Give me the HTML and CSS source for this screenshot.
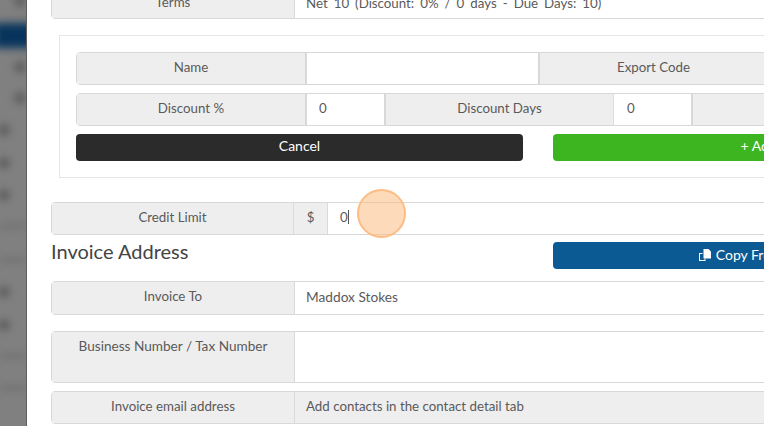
FILE: index.html
```html
<!DOCTYPE html>
<html lang="en">
<head>
<meta charset="utf-8">
<title>Customer</title>
<link rel="stylesheet" href="styles.css">
</head>
<body>
<div class="page">
  <aside class="sidebar">
    <div class="nav-item nav-active"></div>
    <div class="nav-dot nav-dot-0"></div>
    <div class="nav-dot nav-dot-a"></div>
    <div class="nav-dot nav-dot-b"></div>
    <div class="nav-dot nav-dot-c"></div>
    <div class="nav-dot nav-dot-d"></div>
    <div class="nav-dot nav-dot-e"></div>
    <div class="nav-dot nav-dot-f"></div>
    <div class="nav-dot nav-dot-g"></div>
    <div class="nav-streak nav-streak-a"></div>
    <div class="nav-streak nav-streak-b"></div>
    <div class="nav-streak nav-streak-c"></div>
    <div class="nav-streak nav-streak-d"></div>
  </aside>
  <main class="main">
    <div class="row row-terms">
      <div class="label label-lg label-terms">Terms</div>
      <div class="value value-terms">Net 10 (Discount: 0% / 0 days - Due Days: 10)</div>
    </div>

    <section class="box">
      <div class="row row-box">
        <div class="label label-box">Name</div>
        <div class="value value-name"></div>
        <div class="label label-box label-join">Export Code</div>
      </div>
      <div class="row row-box">
        <div class="label label-box">Discount %</div>
        <div class="value value-num">0</div>
        <div class="label label-box label-join">Discount Days</div>
        <div class="value value-num value-num2">0</div>
        <div class="label label-box label-join">Due Days</div>
      </div>
      <div class="btn-row">
        <div class="btn btn-dark">Cancel</div>
        <div class="btn btn-green">+ Add Terms</div>
      </div>
    </section>

    <div class="row row-credit">
      <div class="label label-credit">Credit Limit</div>
      <div class="addon">$</div>
      <div class="value value-credit">0<span class="caret"></span></div>
    </div>

    <div class="heading-row">
      <h2 class="heading">Invoice Address</h2>
      <div class="btn btn-blue">
        <svg class="icon" viewBox="0 0 14 14" width="14" height="14" aria-hidden="true">
          <path d="M1 5h3.500v1H2v6h4.500v-1.500h1V13H1z" fill="#fff"/>
          <path d="M5.500 1h5l2.500 2.500V10.500H5.500z" fill="#fff"/>
        </svg>
        Copy From Customers
      </div>
    </div>

    <div class="row row-invoice">
      <div class="label label-lg">Invoice To</div>
      <div class="value value-wide">Maddox Stokes</div>
    </div>
    <div class="row row-tax">
      <div class="label label-lg label-top">Business Number / Tax Number</div>
      <div class="value"></div>
    </div>
    <div class="row row-email">
      <div class="label label-lg">Invoice email address</div>
      <div class="value value-grey">Add contacts in the contact detail tab</div>
    </div>
  </main>
</div>
<div class="click-ring"></div>
</body>
</html>
```

FILE: styles.css
```css
* { box-sizing: border-box; }
html, body { margin: 0; padding: 0; }
body {
  width: 764px;
  height: 426px;
  overflow: hidden;
  background: #fff;
  font-family: "Lato", "Open Sans", sans-serif;
  font-size: 13.3px;
  color: #5a5a5a;
  position: relative;
}
.page { display: flex; height: 426px; overflow: hidden; }

.sidebar {
  width: 27px;
  flex: none;
  height: 426px;
  background: #808080;
  border-right: 1px solid #5e5e5e;
  position: relative;
  overflow: hidden;
}
.nav-item, .nav-dot, .nav-streak { position: absolute; filter: blur(4px); }
.nav-active { left: -6px; top: 23px; width: 40px; height: 25px; background: #07345c; }
.nav-dot { width: 10px; height: 10px; border-radius: 50%; background: #505050; }
.nav-dot-0 { left: 15px; top: -4px; }
.nav-dot-a { left: 15px; top: 62px; }
.nav-dot-b { left: 15px; top: 93px; }
.nav-dot-c { left: -1px; top: 125px; }
.nav-dot-d { left: -1px; top: 158px; }
.nav-dot-e { left: -1px; top: 190px; }
.nav-dot-f { left: -1px; top: 287px; }
.nav-dot-g { left: -1px; top: 320px; }
.nav-streak { left: 0; width: 27px; height: 4px; background: #6c6c6c; }
.nav-streak-a { top: 224px; }
.nav-streak-b { top: 258px; }
.nav-streak-c { top: 354px; }
.nav-streak-d { top: 386px; }

.main { width: 1100px; flex: none; padding: 0 0 0 24px; margin-top: -14px; }

.row {
  display: flex;
  border: 1px solid #d8d8d8;
  border-radius: 4px;
  background: #fff;
}
.label {
  background: #eee;
  text-align: center;
  flex: none;
  display: flex;
  align-items: center;
  justify-content: center;
  padding-bottom: 4px;
}
.label-lg { width: 243px; border-right: 1px solid #dadada; }
.label-box { width: 230px; border-right: 2px solid #d8d8d8; }
.label-join { width: 230px; border-left: 2px solid #d8d8d8; border-right: 1px solid #dedede; }
.value-num2 + .label-join { border-left: 0; }
.value { padding: 0 0 4px 11px; flex: 1; display: flex; align-items: center; }
.value-wide { font-size: 13.7px; }
.label-terms { padding-bottom: 2px; }
.value-terms { padding-bottom: 0; word-spacing: 2.600px; }

.row-terms { height: 33px; width: 1000px; }
.box {
  margin: 16px 0 0 8px;
  width: 1000px;
  height: 143px;
  border: 1px solid #e6e6e6;
  padding: 16px;
}
.row-box { height: 33px; width: 960px; margin-bottom: 8px; }
.value-name { flex: none; width: 231px; padding: 0; }
.value-num { flex: none; width: 77px; padding-left: 12px; }
.value-num2 { width: 79px; padding-left: 13px; border-right: 2px solid #d8d8d8; }

.btn-row { display: flex; gap: 30px; margin-top: 1px; }
.btn {
  width: 447px;
  height: 27px;
  border-radius: 4px;
  color: #fff;
  font-size: 14px;
  display: flex;
  align-items: center;
  justify-content: center;
  flex: none;
  padding-bottom: 4px;
}
.btn-dark { background: #2b2b2b; }
.btn-green { background: #3cb521; padding-left: 4px; }
.btn-blue { background: #0b5a94; gap: 4px; padding: 0 3px 2px 0; }
.icon { flex: none; }

.row-credit { height: 33px; width: 1000px; margin-top: 24px; }
.label-credit { width: 242px; border-right: 1px solid #dadada; padding-bottom: 4px; }
.addon {
  width: 34px;
  flex: none;
  background: #eee;
  border-right: 1px solid #dadada;
  display: flex;
  align-items: center;
  justify-content: center;
  padding-bottom: 4px;
}
.value-credit { padding: 0 0 4px 12px; }
.caret { width: 1px; height: 14px; background: #555; }

.heading-row { display: flex; justify-content: space-between; width: 949px; height: 46px; padding-top: 7px; }
.heading { margin: -2px 0 0; font-size: 20px; font-weight: 400; line-height: 23px; color: #444; }

.row-invoice { height: 34px; width: 1000px; }
.row-tax { height: 52px; width: 1000px; margin-top: 16px; }
.row-email { height: 33px; width: 1000px; margin-top: 8px; }
.label-top { align-items: flex-start; padding: 6px 0 0; font-size: 13.600px; }
.value-grey { background: #eee; }

.click-ring {
  position: absolute;
  left: 357px;
  top: 189px;
  width: 49px;
  height: 49px;
  border-radius: 50%;
  background: rgba(252, 190, 130, 0.55);
  border: 2px solid #fcbd85;
}
```
